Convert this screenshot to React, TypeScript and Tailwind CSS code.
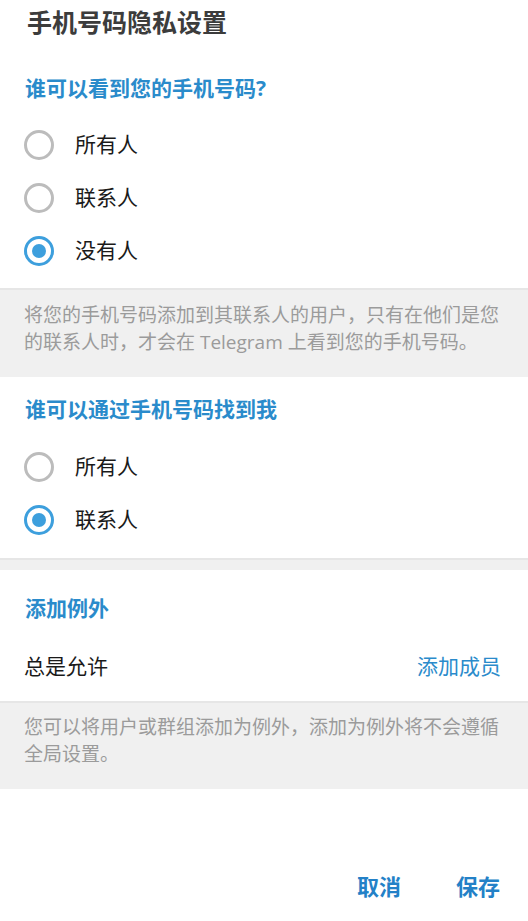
import React, { useState } from "react";

const FONT = { fontFamily: '"Open Sans", "Noto Sans CJK SC", sans-serif' };

function Radio({ checked, label, onClick }: { checked: boolean; label: string; onClick: () => void }) {
  return (
    <div className="flex h-[53px] items-center px-[24px] cursor-pointer" onClick={onClick}>
      <div
        className={
          checked
            ? "flex h-[30px] w-[30px] items-center justify-center rounded-full border-[3px] border-[#3d9fdd]"
            : "flex h-[30px] w-[30px] items-center justify-center rounded-full border-[3px] border-[#bcbcbc]"
        }
      >
        {checked && <div className="h-[14px] w-[14px] rounded-full bg-[#3d9fdd]" />}
      </div>
      <span className="ml-[21px] text-[21px] leading-none text-[#1a1a1a]">{label}</span>
    </div>
  );
}

export default function App() {
  const [see, setSee] = useState(2);
  const [find, setFind] = useState(1);
  return (
    <div className="min-h-[921px] w-[528px] bg-white" style={FONT}>
      {/* Section 1 */}
      <div className="bg-white pb-[11px]">
        <div className="flex h-[46px] items-center px-[27px] text-[25px] font-bold text-[#3c3c3c]">
          手机号码隐私设置
        </div>
        <div className="mt-[21px] flex h-[44px] items-center px-[25px] text-[21px] font-bold text-[#2a8bcb]">
          谁可以看到您的手机号码?
        </div>
        <div className="mt-[7px]">
          <Radio checked={see === 0} label="所有人" onClick={() => setSee(0)} />
          <Radio checked={see === 1} label="联系人" onClick={() => setSee(1)} />
          <Radio checked={see === 2} label="没有人" onClick={() => setSee(2)} />
        </div>
      </div>

      <div className="border-t-2 border-[#e6e6e6] bg-[#f0f0f0] px-[24px] pt-[12px] pb-[21px] text-[19px] leading-[27px] text-[#9b9b9b]">
        将您的手机号码添加到其联系人的用户，只有在他们是您的联系人时，才会在 Telegram 上看到您的手机号码。
      </div>

      {/* Section 2 */}
      <div className="bg-white pt-[11px] pb-[12px]">
        <div className="flex h-[44px] items-center px-[25px] text-[21px] font-bold text-[#2a8bcb]">
          谁可以通过手机号码找到我
        </div>
        <div className="mt-[8px]">
          <Radio checked={find === 0} label="所有人" onClick={() => setFind(0)} />
          <Radio checked={find === 1} label="联系人" onClick={() => setFind(1)} />
        </div>
      </div>

      <div className="h-[12px] border-t-2 border-[#e6e6e6] bg-[#f0f0f0]" />

      {/* Section 3 */}
      <div className="bg-white pt-[17px] pb-[9px]">
        <div className="flex h-[44px] items-center px-[25px] text-[21px] font-bold text-[#2a8bcb]">
          添加例外
        </div>
        <div className="mt-[9px] flex h-[52px] items-center justify-between pl-[24px] pr-[27px]">
          <span className="text-[21px] leading-none text-[#1a1a1a]">总是允许</span>
          <span className="text-[21px] leading-none text-[#2a8bcb]">添加成员</span>
        </div>
      </div>

      <div className="border-t-2 border-[#e6e6e6] bg-[#f0f0f0] px-[24px] pt-[11px] pb-[21px] text-[19px] leading-[27px] text-[#9b9b9b]">
        您可以将用户或群组添加为例外，添加为例外将不会遵循全局设置。
      </div>

      <div className="mt-[75px] flex h-[44px] items-center justify-end gap-[55px] pr-[28px]">
        <button className="text-[22px] font-bold leading-none text-[#2381c7]">取消</button>
        <button className="text-[22px] font-bold leading-none text-[#2381c7]">保存</button>
      </div>
    </div>
  );
}
